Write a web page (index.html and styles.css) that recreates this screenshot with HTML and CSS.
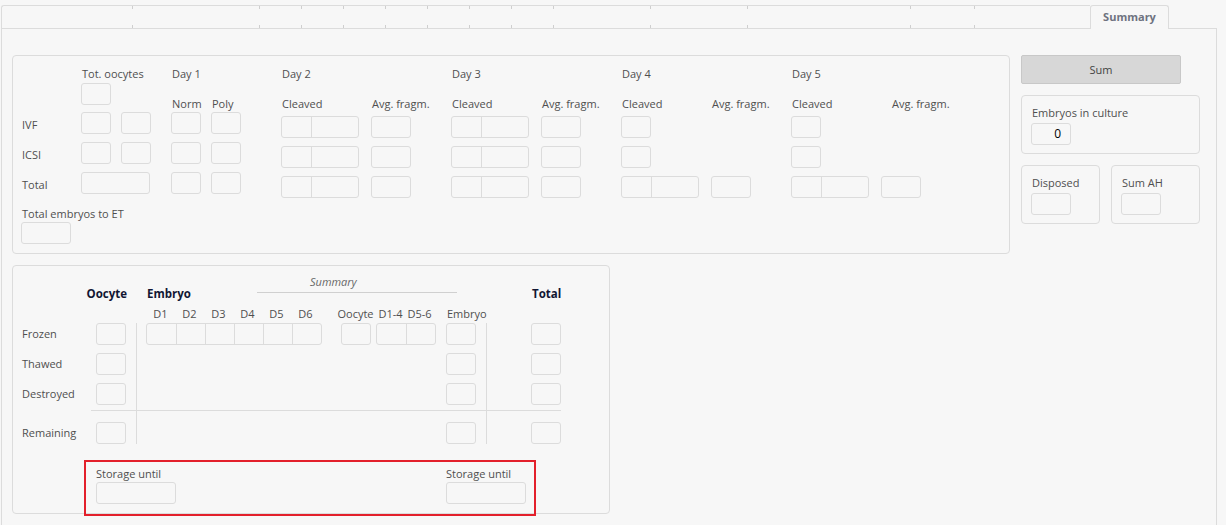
FILE: index.html
```html
<!DOCTYPE html>
<html lang="en">
<head>
    <meta charset="UTF-8">
    <title>Summary</title>
    <link rel="stylesheet" href="styles.css">
</head>
<body>
    <div class="tabs">
        <div class="tab tab-first"></div>
        <div class="tab tab-b"></div>
        <div class="tab tab-s"></div>
        <div class="tab tab-s"></div>
        <div class="tab tab-s"></div>
        <div class="tab tab-s"></div>
        <div class="tab tab-s"></div>
        <div class="tab tab-s"></div>
        <div class="tab tab-s"></div>
        <div class="tab tab-m"></div>
        <div class="tab tab-m"></div>
        <div class="tab tab-xl"></div>
        <div class="tab tab-sm"></div>
        <div class="tab tab-l"></div>
        <div class="tab-active">Summary</div>
        <div class="tab-fill"></div>
    </div>

    <div class="tab-body">
        <div class="layout">
            <!-- culture counts per day -->
            <div class="panel top-panel">
                <div class="day-grid">
                    <span></span>
                    <span class="hd span2">Tot. oocytes</span>
                    <span class="hd span2">Day 1</span>
                    <span class="hd span2">Day 2</span>
                    <span class="hd span2">Day 3</span>
                    <span class="hd span2">Day 4</span>
                    <span class="hd span2">Day 5</span>

                    <span></span>
                    <div class="box first"></div>
                    <span></span>
                    <span class="sub">Norm</span>
                    <span class="sub">Poly</span>
                    <span class="sub">Cleaved</span>
                    <span class="sub">Avg. fragm.</span>
                    <span class="sub">Cleaved</span>
                    <span class="sub">Avg. fragm.</span>
                    <span class="sub">Cleaved</span>
                    <span class="sub">Avg. fragm.</span>
                    <span class="sub">Cleaved</span>
                    <span class="sub sub-shift">Avg. fragm.</span>

                    <span class="lbl">IVF</span>
                    <div class="box"></div>
                    <div class="box"></div>
                    <div class="box"></div>
                    <div class="box"></div>
                    <div class="split"><div class="part"></div></div>
                    <div class="box avg"></div>
                    <div class="split"><div class="part"></div></div>
                    <div class="box avg"></div>
                    <div class="box low"></div>
                    <span></span>
                    <div class="box low"></div>
                    <span></span>

                    <span class="lbl">ICSI</span>
                    <div class="box"></div>
                    <div class="box"></div>
                    <div class="box"></div>
                    <div class="box"></div>
                    <div class="split"><div class="part"></div></div>
                    <div class="box avg"></div>
                    <div class="split"><div class="part"></div></div>
                    <div class="box avg"></div>
                    <div class="box low"></div>
                    <span></span>
                    <div class="box low"></div>
                    <span></span>

                    <span class="lbl">Total</span>
                    <div class="box wide span2"></div>
                    <div class="box"></div>
                    <div class="box"></div>
                    <div class="split"><div class="part"></div></div>
                    <div class="box avg"></div>
                    <div class="split"><div class="part"></div></div>
                    <div class="box avg"></div>
                    <div class="split"><div class="part"></div></div>
                    <div class="box avg"></div>
                    <div class="split"><div class="part"></div></div>
                    <div class="box avg"></div>

                    <div class="et">
                        <div class="lbl-top">Total embryos to ET</div>
                        <div class="box field-et"></div>
                    </div>
                </div>
            </div>

            <div class="side">
                <div class="sum-btn">Sum</div>
                <div class="panel side-panel">
                    <div class="lbl-top">Embryos in culture</div>
                    <div class="field">0</div>
                </div>
                <div class="side-row">
                    <div class="panel side-panel disposed">
                        <div class="lbl-top">Disposed</div>
                        <div class="field"></div>
                    </div>
                    <div class="panel side-panel sum-ah">
                        <div class="lbl-top">Sum AH</div>
                        <div class="field"></div>
                    </div>
                </div>
            </div>
        </div>

        <!-- frozen / thawed overview -->
        <div class="panel bottom-panel">
            <div class="frz-grid">
                <span class="bold oocyte-hd">Oocyte</span>
                <span></span>
                <div class="emb-head">
                    <span class="bold">Embryo</span>
                    <span class="sum-title">Summary</span>
                </div>
                <span></span>
                <span class="bold total-hd">Total</span>

                <span class="span3"></span>
                <div class="day-labels">
                    <span>D1</span><span>D2</span><span>D3</span><span>D4</span><span>D5</span><span>D6</span>
                </div>
                <div class="day-labels"><span>Oocyte</span></div>
                <div class="day-labels"><span>D1-4</span><span>D5-6</span></div>
                <span class="emb-sub">Embryo</span>
                <span></span>
                <span></span>

                <div class="vline vline-a"></div>
                <div class="vline vline-b"></div>
                <div class="hline"></div>

                <span class="lbl row-lbl">Frozen</span>
                <div class="box row-box"></div>
                <div class="cells row-box">
                    <div class="cell"></div><div class="cell"></div><div class="cell"></div>
                    <div class="cell"></div><div class="cell"></div><div class="cell"></div>
                </div>
                <div class="box row-box"></div>
                <div class="cells row-box">
                    <div class="cell"></div><div class="cell"></div>
                </div>
                <div class="box row-box"></div>
                <div class="box row-box"></div>

                <span class="lbl row-lbl">Thawed</span>
                <div class="box row-box"></div>
                <span class="span3"></span>
                <div class="box row-box"></div>
                <div class="box row-box"></div>

                <span class="lbl row-lbl">Destroyed</span>
                <div class="box row-box"></div>
                <span class="span3"></span>
                <div class="box row-box"></div>
                <div class="box row-box"></div>

                <span class="lbl remain-lbl">Remaining</span>
                <div class="box"></div>
                <span class="span3"></span>
                <div class="box"></div>
                <div class="box"></div>

                <span></span>
                <div class="storage storage-a">
                    <div class="lbl-top">Storage until</div>
                    <div class="box date"></div>
                </div>
                <div class="storage storage-b">
                    <div class="lbl-top">Storage until</div>
                    <div class="box date"></div>
                </div>
            </div>
            <div class="highlight"></div>
        </div>
    </div>
</body>
</html>
```

FILE: styles.css
```css
html, body { overflow: hidden; }
body { margin: 0; background: #f7f7f7; font-family: "Open Sans", Arial, sans-serif; font-size: 11px; color: #4f4f4f; }

/* tab strip */
.tabs { display: flex; height: 24px; margin: 5px 9px 0 1px; }
.tab { box-sizing: border-box; height: 24px; border-top: 1px solid #dcdcdc; border-bottom: 1px solid #dcdcdc; position: relative; }
.tab::before { content: ""; position: absolute; left: -1px; top: 0; width: 1px; height: 3px; background: #cfcfcf; }
.tab::after { content: ""; position: absolute; left: -1px; bottom: 0; width: 1px; height: 3px; background: #cfcfcf; }
.tab-first { width: 132px; border-left: 1px solid #dcdcdc; border-top-left-radius: 3px; }
.tab-first::before, .tab-first::after { display: none; }
.tab-b { width: 127px; }
.tab-s { width: 42px; }
.tab-m { width: 97px; }
.tab-xl { width: 163px; }
.tab-sm { width: 64px; }
.tab-l { width: 115px; }
.tab-active { box-sizing: border-box; width: 79px; height: 24px; border: 1px solid #dcdcdc; border-bottom: none; border-radius: 3px 3px 0 0; text-align: center; line-height: 22px; font-weight: bold; color: #6e7280; }
.tab-fill { flex: 1; border-bottom: 1px solid #dcdcdc; }

.tab-body { box-sizing: border-box; height: 510px; margin: 0 9px 0 1px; border-left: 1px solid #dcdcdc; border-right: 1px solid #dcdcdc; padding: 26px 0 0 10px; }
.layout { display: flex; gap: 11px; align-items: flex-start; }

.panel { box-sizing: border-box; border: 1px solid #dcdcdc; border-radius: 4px; }
.box { box-sizing: border-box; width: 30px; height: 22px; border: 1px solid #dcdcdc; border-radius: 3px; }
.lbl { line-height: 22px; }
.lbl-top { line-height: 16px; }

/* top panel */
.top-panel { width: 998px; height: 199px; padding: 10px 0 0 9px; }
.day-grid { display: grid; grid-template-columns: 59px 40px 50px 40px 70px 90px 80px 90px 80px 90px 80px 90px 1fr; grid-template-rows: 16px 30px 30px 30px 30px auto; }
.span2 { grid-column: span 2; }
.span3 { grid-column: span 3; }
.hd { line-height: 16px; padding-left: 1px; }
.sub { align-self: end; line-height: 16px; padding-left: 1px; }
.sub-shift { padding-left: 11px; }
.box.first { margin-top: 1px; }
.day-grid .lbl { line-height: 16px; margin-top: 5px; }
.box.wide { width: 69px; }
.box.avg { width: 40px; margin-top: 4px; }
.box.low { margin-top: 4px; }
.split { box-sizing: border-box; width: 78px; height: 22px; margin-top: 4px; border: 1px solid #dcdcdc; border-radius: 3px; }
.split .part { width: 29px; height: 100%; border-right: 1px solid #dcdcdc; }
.et { grid-column: 1 / -1; margin-top: 4px; }
.field-et { width: 50px; margin-top: 0; margin-left: -1px; }

/* right column */
.side { width: 179px; display: flex; flex-direction: column; gap: 11px; }
.sum-btn { box-sizing: border-box; width: 160px; height: 29px; background: #d7d7d7; border: 1px solid #c8c8c8; border-radius: 2px; text-align: center; line-height: 27px; color: #444; }
.side-panel { height: 59px; padding: 9px 0 0 10px; }
.side-row { display: flex; gap: 11px; }
.disposed { width: 79px; }
.sum-ah { width: 89px; }
.field { box-sizing: border-box; width: 40px; height: 22px; margin: 2px 0 0 -1px; border: 1px solid #dcdcdc; border-radius: 3px; text-align: right; padding-right: 9px; line-height: 20px; color: #000; font-size: 12px; }

/* bottom panel */
.bottom-panel { position: relative; width: 598px; height: 249px; margin-top: 11px; padding: 6px 0 0 9px; }
.frz-grid { display: grid; grid-template-columns: 74px 40px 10px 195px 35px 70px 40px 45px 40px; grid-template-rows: 30px 20px 30px 30px 26px 14px 22px auto; }
.bold { font-weight: bold; color: #111633; font-size: 11.5px; align-self: end; line-height: 16px; }
.oocyte-hd { grid-column: span 2; justify-self: end; margin-right: 9px; }
.total-hd { padding-left: 1px; }
.emb-head { grid-column: span 4; display: grid; grid-template-columns: 111px 200px; }
.emb-head .bold { padding-left: 1px; }
.sum-title { align-self: start; padding: 2px 0 2px 53px; font-style: italic; color: #666; line-height: 16px; border-bottom: 1px solid #d0d0d0; }
.day-labels { display: flex; align-self: end; line-height: 16px; }
.day-labels span { width: 29px; display: flex; justify-content: center; }
.emb-sub { align-self: end; line-height: 16px; padding-left: 1px; }
.row-lbl { margin-top: 1px; }
.row-box { margin-top: 1px; }
.cells { box-sizing: border-box; display: flex; height: 22px; border: 1px solid #dcdcdc; border-radius: 3px; align-self: start; justify-self: start; }
.cell { box-sizing: border-box; width: 29px; }
.cell + .cell { border-left: 1px solid #dcdcdc; }
.vline { border-left: 1px solid #dcdcdc; margin-top: 1px; }
.vline-a { grid-column: 3; grid-row: 3 / 8; }
.vline-b { grid-column: 8; grid-row: 3 / 8; }
.hline { grid-column: 1 / 10; grid-row: 6; margin: 2px 10px 0 69px; border-top: 1px solid #dcdcdc; }
.storage { margin-top: 22px; }
.storage-a { grid-column: span 5; }
.storage-b { grid-column: span 3; }
.box.date { width: 80px; }
.highlight { position: absolute; left: 71px; top: 194px; width: 452px; height: 56px; box-sizing: border-box; border: 2px solid #e3202b; }
```
